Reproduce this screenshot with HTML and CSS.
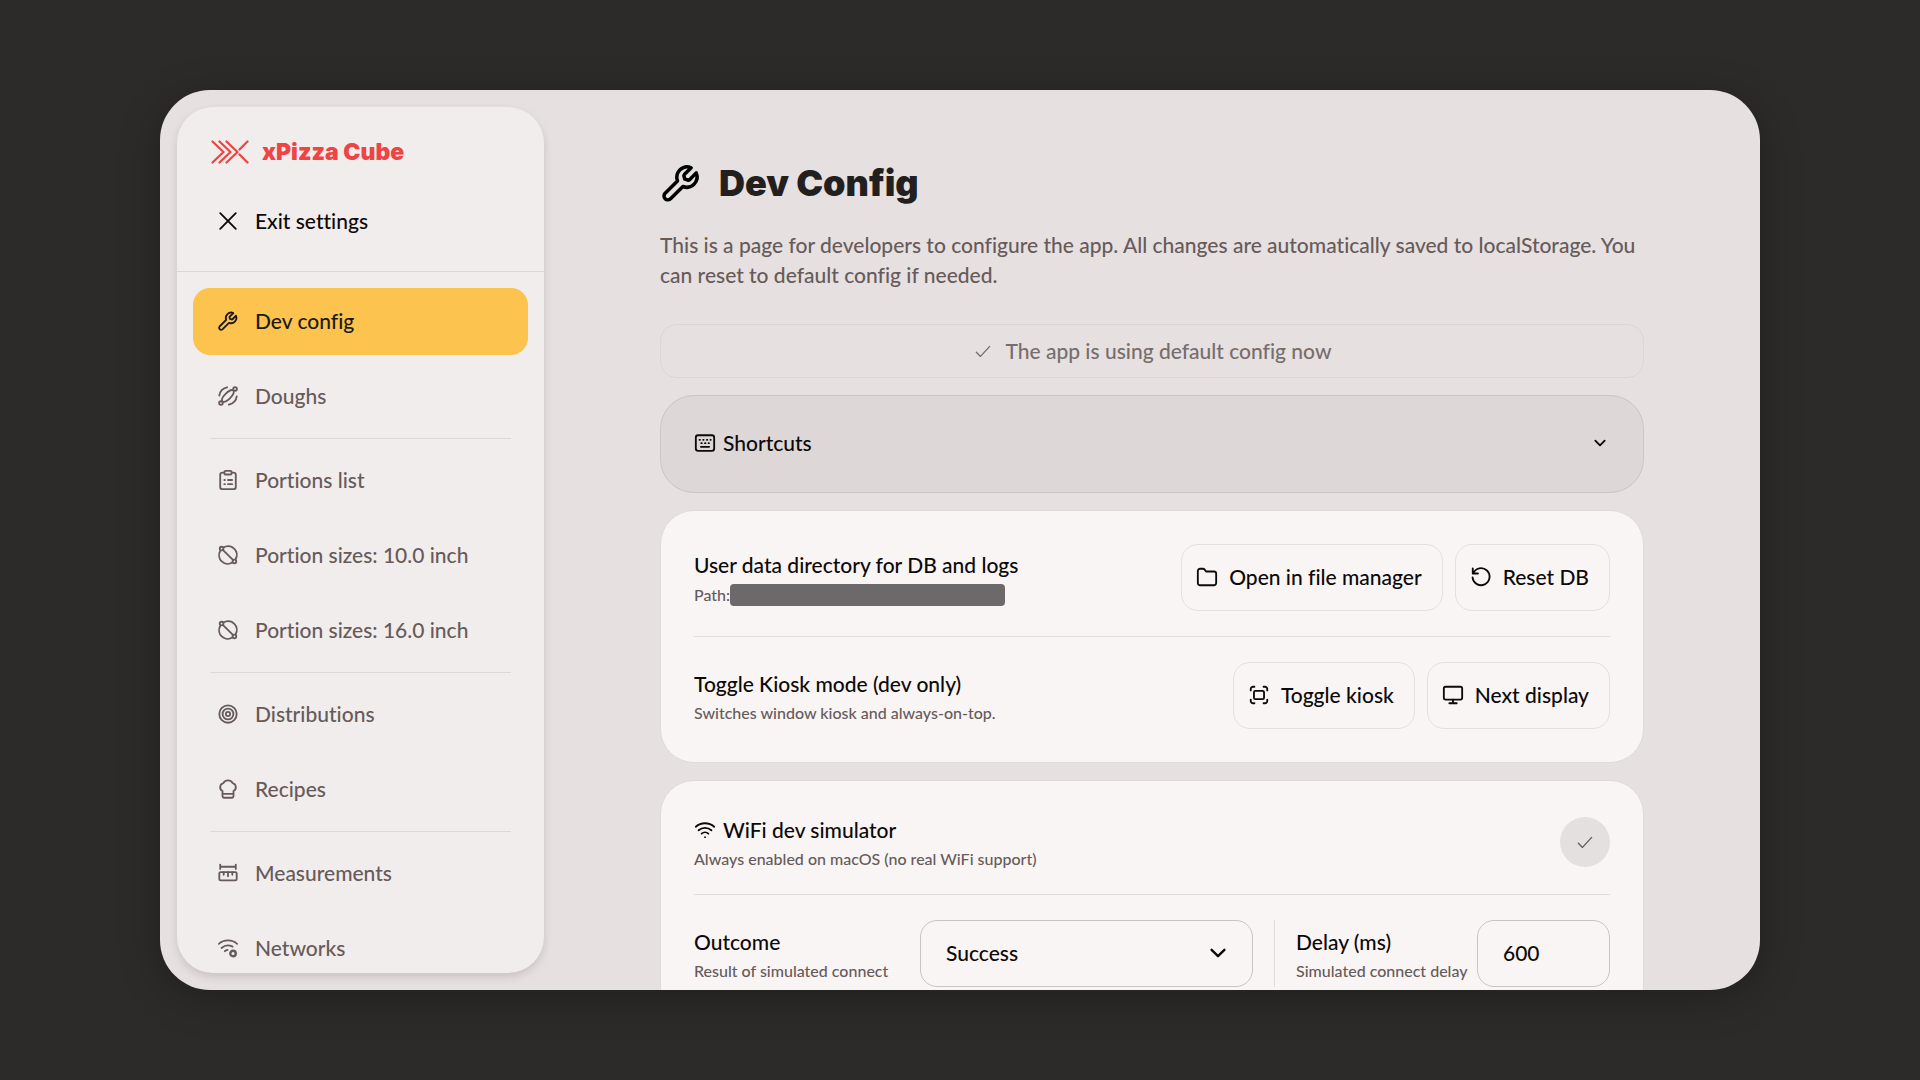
FILE: index.html
```
<!DOCTYPE html>
<html lang="en">
<head>
    <meta charset="UTF-8">
    <meta name="viewport" content="width=device-width, initial-scale=1.0">
    <title>xPizza Cube - Dev Config</title>
    <link rel="stylesheet" href="styles.css">
</head>

<body>
    <!-- shared icons -->
    <svg class="icon-defs" aria-hidden="true">
        <symbol id="icon-wrench" viewBox="0 0 24 24">
            <path d="M17.8 3.3l-3.9 3.9a1 1 0 0 0-.2 1l.5 1.6 1.7.5a1 1 0 0 0 1-.2l3.8-3.9a5.9 5.9 0 0 1-7.6 7.8l-7.2 7.1a2.2 2.2 0 0 1-3.1-3.1l7.2-7.2a5.9 5.9 0 0 1 7.8-7.5z"/>
        </symbol>
        <symbol id="icon-check" viewBox="0 0 24 24">
            <path d="M4 13.5l5 5L20 6.5"/>
        </symbol>
        <symbol id="icon-chevron" viewBox="0 0 24 24">
            <path d="M5 8.5l7 7 7-7"/>
        </symbol>
        <symbol id="icon-portion" viewBox="0 0 24 24">
            <path d="M7 3.9a9.5 9.5 0 0 1 13.3 12.8M16.8 20.2A9.5 9.5 0 0 1 3.6 7.3M6.6 6.6l10.8 10.8"/>
            <circle cx="5" cy="5" r="2"/>
            <circle cx="19" cy="19" r="2"/>
        </symbol>
    </svg>

    <div class="window">
        <aside class="sidebar">
            <div class="sidebar-header">
                <div class="logo">
                    <svg class="logo-mark" viewBox="0 0 38 24">
                        <path d="M1.5 1.5L12.5 12l-11 10.5M8.5 1.5l11 10.5-11 10.5M15.5 1.5l11 10.5-11 10.5M36.5 1.5l-8 8M28.5 14.5l8 8"/>
                    </svg>
                    <span>xPizza Cube</span>
                </div>
                <a href="#" class="nav-item nav-exit">
                    <svg class="icon" viewBox="0 0 24 24"><path d="M3.5 3.5l17 17M20.5 3.5l-17 17"/></svg>
                    Exit settings
                </a>
            </div>
            <nav class="nav">
                <a href="#" class="nav-item active">
                    <svg class="icon"><use href="#icon-wrench"/></svg>
                    Dev config
                </a>
                <a href="#" class="nav-item">
                    <svg class="icon" viewBox="0 0 24 24">
                        <path d="M5.8 17.9c-1.6-2.4 1-5.6 3.6-8.2s5.9-5.3 8.5-3.9c1.5 2.5-.9 5.8-3.6 8.5s-6 5.2-8.5 3.6z"/>
                        <path d="M2.5 11.5c.6-4.5 3.8-8 8.5-9M21.5 12.5c-.6 4.5-3.8 8-8.5 9"/>
                        <circle cx="4.3" cy="19.7" r="2"/>
                        <circle cx="19.7" cy="4.3" r="2"/>
                    </svg>
                    Doughs
                </a>
                <hr>
                <a href="#" class="nav-item">
                    <svg class="icon" viewBox="0 0 24 24">
                        <path d="M8 4H6a2.5 2.5 0 0 0-2.5 2.5v13A2.5 2.5 0 0 0 6 22h12a2.5 2.5 0 0 0 2.5-2.5v-13A2.5 2.5 0 0 0 18 4h-2"/>
                        <rect x="8" y="2" width="8" height="4" rx="1.5"/>
                        <path d="M8 12h.6M12 12h4.5M8 16.5h.6M12 16.5h4.5"/>
                    </svg>
                    Portions list
                </a>
                <a href="#" class="nav-item">
                    <svg class="icon"><use href="#icon-portion"/></svg>
                    Portion sizes: 10.0 inch
                </a>
                <a href="#" class="nav-item">
                    <svg class="icon"><use href="#icon-portion"/></svg>
                    Portion sizes: 16.0 inch
                </a>
                <hr>
                <a href="#" class="nav-item">
                    <svg class="icon" viewBox="0 0 24 24">
                        <circle cx="12" cy="12" r="9.5"/>
                        <circle cx="12" cy="12" r="5.9"/>
                        <circle cx="12" cy="12" r="2.3"/>
                    </svg>
                    Distributions
                </a>
                <a href="#" class="nav-item">
                    <svg class="icon" viewBox="0 0 24 24">
                        <path d="M6 14.2A4.7 4.7 0 0 1 6.9 5.5a6 6 0 0 1 10.2 0 4.7 4.7 0 0 1 .9 8.7V20a1.5 1.5 0 0 1-1.5 1.5H7.5A1.5 1.5 0 0 1 6 20zM6 17.3h12"/>
                    </svg>
                    Recipes
                </a>
                <hr>
                <a href="#" class="nav-item">
                    <svg class="icon" viewBox="0 0 24 24">
                        <path d="M3.5 3v4.5M20.5 3v4.5M3.5 5.2h17"/>
                        <rect x="2.5" y="11" width="19" height="9" rx="1.5"/>
                        <path d="M7.3 11v3M12 11v4.5M16.7 11v3"/>
                    </svg>
                    Measurements
                </a>
                <a href="#" class="nav-item">
                    <svg class="icon" viewBox="0 0 24 24">
                        <path d="M2 7.5a15 15 0 0 1 20 0M5 12a10.5 10.5 0 0 1 12-1.5M8.5 15.5a5.5 5.5 0 0 1 3-1.5"/>
                        <circle cx="17.5" cy="18" r="3" stroke-width="2.6"/>
                    </svg>
                    Networks
                </a>
            </nav>
        </aside>

        <main class="main">
            <div class="content">
                <h1 class="page-title">
                    <svg class="icon icon-title"><use href="#icon-wrench"/></svg>
                    Dev Config
                </h1>
                <p class="page-desc">This is a page for developers to configure the app. All changes are automatically saved to localStorage. You can reset to default config if needed.</p>

                <div class="sections">
                    <button type="button" class="status" disabled>
                        <svg class="icon icon-thin"><use href="#icon-check"/></svg>
                        The app is using default config now
                    </button>

                    <button type="button" class="shortcuts" aria-expanded="false">
                        <svg class="icon" viewBox="0 0 24 24">
                            <rect x="2" y="3.5" width="20" height="17" rx="2.5"/>
                            <path d="M6 8.5h.5M10 8.5h.5M14 8.5h.5M18 8.5h.3M8 12.2h.5M12 12.2h.5M16 12.2h.3M7.5 16.2h9"/>
                        </svg>
                        Shortcuts
                        <svg class="icon icon-small"><use href="#icon-chevron"/></svg>
                    </button>

                    <section class="card">
                        <div class="row">
                            <div class="row-text">
                                <h2>User data directory for DB and logs</h2>
                                <p class="path">Path:<span class="redacted"></span></p>
                            </div>
                            <div class="actions">
                                <button type="button" class="btn">
                                    <svg class="icon" viewBox="0 0 24 24"><path d="M2 18.5v-13A2.5 2.5 0 0 1 4.5 3h3.2a2 2 0 0 1 1.5.7L11 6h8.5A2.5 2.5 0 0 1 22 8.5v10a2.5 2.5 0 0 1-2.5 2.5h-15A2.5 2.5 0 0 1 2 18.5z"/></svg>
                                    Open in file manager
                                </button>
                                <button type="button" class="btn">
                                    <svg class="icon" viewBox="0 0 24 24"><path d="M3 2.5v5.7h5.7M3.5 8a9.3 9.3 0 1 1-.7 4.5"/></svg>
                                    Reset DB
                                </button>
                            </div>
                        </div>
                        <hr>
                        <div class="row">
                            <div class="row-text">
                                <h2>Toggle Kiosk mode (dev only)</h2>
                                <p>Switches window kiosk and always-on-top.</p>
                            </div>
                            <div class="actions">
                                <button type="button" class="btn">
                                    <svg class="icon" viewBox="0 0 24 24">
                                        <path d="M3 7V5.5A2.5 2.5 0 0 1 5.5 3H7M17 3h1.5A2.5 2.5 0 0 1 21 5.5V7M21 17v1.5a2.5 2.5 0 0 1-2.5 2.5H17M7 21H5.5A2.5 2.5 0 0 1 3 18.5V17"/>
                                        <rect x="6.5" y="7.5" width="11" height="9" rx="1.5"/>
                                    </svg>
                                    Toggle kiosk
                                </button>
                                <button type="button" class="btn">
                                    <svg class="icon" viewBox="0 0 24 24">
                                        <rect x="2" y="3" width="20" height="14" rx="2"/>
                                        <path d="M12 17v4M8 21h8"/>
                                    </svg>
                                    Next display
                                </button>
                            </div>
                        </div>
                    </section>

                    <section class="card">
                        <div class="row">
                            <div class="row-text">
                                <h2>
                                    <svg class="icon" viewBox="0 0 24 24">
                                        <path d="M2 8.5a15 15 0 0 1 20 0M5 12.3a10.5 10.5 0 0 1 14 0M8.3 16a5.5 5.5 0 0 1 7.4 0M12 19.8h.01"/>
                                    </svg>
                                    WiFi dev simulator
                                </h2>
                                <p>Always enabled on macOS (no real WiFi support)</p>
                            </div>
                            <div class="round-check">
                                <svg class="icon icon-thin"><use href="#icon-check"/></svg>
                            </div>
                        </div>
                        <hr>
                        <div class="fields">
                            <div class="field">
                                <label for="outcome">
                                    Outcome
                                    <small>Result of simulated connect</small>
                                </label>
                                <div class="select-wrap">
                                    <select id="outcome" name="outcome">
                                        <option value="success">Success</option>
                                    </select>
                                    <svg class="icon"><use href="#icon-chevron"/></svg>
                                </div>
                            </div>
                            <div class="field field-delay">
                                <label for="delay">
                                    Delay (ms)
                                    <small>Simulated connect delay</small>
                                </label>
                                <input type="number" id="delay" name="delay" value="600">
                            </div>
                        </div>
                    </section>
                </div>
            </div>
        </main>
    </div>
</body>
</html>
```
FILE: styles.css
```
* {
    box-sizing: border-box;
}

body {
    margin: 0;
    height: 100vh;
    padding: 90px 160px;
    background-color: #2c2b29;
    font-family: Lato, sans-serif;
    font-size: 21px;
    font-weight: 500;
    font-variant-ligatures: none;
    line-height: 30px;
    color: #0c0a09;
}

h1, h2, p {
    margin: 0;
}

button, input, select {
    font: inherit;
    font-variant-ligatures: none;
    color: inherit;
}

hr {
    width: 100%;
    height: 1px;
    margin: 0;
    border: none;
    background-color: #e2dddd;
}

.icon-defs {
    display: none;
}

.icon {
    flex: none;
    width: 22px;
    height: 22px;
    fill: none;
    stroke: currentColor;
    stroke-width: 2;
    stroke-linecap: round;
    stroke-linejoin: round;
}

.icon-thin {
    width: 20px;
    height: 20px;
    stroke-width: 1.6;
}

.icon-small {
    width: 20px;
    height: 20px;
    padding: 2px;
    stroke-width: 2.8;
}

.window {
    display: flex;
    height: 100%;
    overflow: hidden;
    border-radius: 50px;
    background-color: #e6e0e0;
    box-shadow: 0 8px 40px rgba(0, 0, 0, 0.25);
}

/* sidebar */
.sidebar {
    display: flex;
    flex-direction: column;
    flex: none;
    width: 367px;
    margin: 17px 0 17px 17px;
    overflow: hidden;
    border-radius: 36px;
    background-color: #f1eded;
    box-shadow: 0 4px 10px -1px rgba(40, 20, 20, 0.16);
}

.sidebar-header {
    padding: 17px 16px 16px;
    border-bottom: 1px solid #dcd7d7;
}

.logo {
    display: flex;
    align-items: center;
    gap: 13px;
    height: 56px;
    margin-bottom: 8px;
    padding-left: 18px;
    font-family: Inter, sans-serif;
    font-size: 23px;
    font-weight: 900;
    color: #ef4444;
}

.logo-mark {
    width: 38px;
    height: 24px;
    fill: none;
    stroke: currentColor;
    stroke-width: 2.3;
    stroke-linecap: round;
    stroke-linejoin: round;
}

.nav {
    display: flex;
    flex-direction: column;
    gap: 8px;
    padding: 16px;
}

.nav hr {
    width: auto;
    margin: 0 17px;
    background-color: #ddd8d8;
}

.nav-item {
    display: flex;
    align-items: center;
    flex: none;
    gap: 16px;
    height: 67px;
    padding: 0 24px 2px;
    border-radius: 17px;
    color: #665b5a;
    text-decoration: none;
}

.nav-exit {
    color: #0c0a09;
}

.nav-item.active {
    background-color: #fcc34f;
    color: #1c1917;
}

/* main */
.main {
    flex: 1;
    padding: 68px 24px 0;
    overflow: hidden;
}

.content {
    max-width: 984px;
    margin: 0 auto;
}

.page-title {
    display: flex;
    align-items: center;
    gap: 17px;
    font-family: Inter, sans-serif;
    font-size: 36px;
    font-weight: 900;
    line-height: 50px;
    color: #231f1e;
}

.icon-title {
    width: 42px;
    height: 42px;
    color: #000000;
}

.page-desc {
    margin: 22px 0 34px;
    color: #665b5a;
}

.sections {
    display: flex;
    flex-direction: column;
    gap: 17px;
}

.status {
    display: flex;
    align-items: center;
    justify-content: center;
    gap: 13px;
    height: 54px;
    padding-bottom: 2px;
    border: 1px solid #dcd7d7;
    border-radius: 17px;
    background: none;
    color: #756e6e;
}

.shortcuts {
    display: flex;
    align-items: center;
    gap: 7px;
    height: 98px;
    padding: 0 33px 2px;
    border: 1px solid #cbc6c6;
    border-radius: 34px;
    background-color: #ddd7d7;
    cursor: pointer;
}

.shortcuts .icon-small {
    margin-left: auto;
}

.card {
    padding: 33px;
    border: 1px solid #e0dada;
    border-radius: 34px;
    background-color: #f9f5f5;
}

.card hr {
    margin: 25px 0;
}

.row {
    display: flex;
    align-items: center;
    justify-content: space-between;
    min-height: 55px;
}

.row h2 {
    display: flex;
    align-items: center;
    gap: 7px;
    margin-bottom: 4px;
    font-size: 21px;
    font-weight: 500;
}

.row p, .field small {
    font-size: 16px;
    line-height: 20px;
    color: #665b5a;
}

.path {
    display: flex;
    align-items: center;
}

.redacted {
    width: 275px;
    height: 22px;
    border-radius: 4px;
    background-color: #6b6969;
}

.actions {
    display: flex;
    gap: 12px;
}

.btn {
    display: flex;
    align-items: center;
    gap: 11px;
    height: 67px;
    padding: 0 20px 2px 14px;
    border: 1px solid #e5e0e0;
    border-radius: 17px;
    background: none;
    cursor: pointer;
}

.round-check {
    display: flex;
    align-items: center;
    justify-content: center;
    width: 50px;
    height: 50px;
    border-radius: 50%;
    background-color: #e5e0e0;
    color: #665b5a;
}

.fields {
    display: grid;
    grid-template-columns: 1fr 336px;
    gap: 21px;
}

.field {
    display: flex;
    align-items: center;
    justify-content: space-between;
    white-space: nowrap;
}

.field-delay {
    padding-left: 21px;
    border-left: 1px solid #e2dddd;
}

.field small {
    display: block;
    margin-top: 4px;
}

.field select, .field input {
    width: 100%;
    height: 67px;
    padding: 0 25px 2px;
    border: 1px solid #c9c4c4;
    border-radius: 17px;
    background: none;
    appearance: none;
}

.field input {
    width: 133px;
    appearance: textfield;
}

.select-wrap {
    position: relative;
    width: 333px;
}

.select-wrap .icon {
    position: absolute;
    top: 22px;
    right: 24px;
    stroke-width: 2.6;
    pointer-events: none;
}
```
